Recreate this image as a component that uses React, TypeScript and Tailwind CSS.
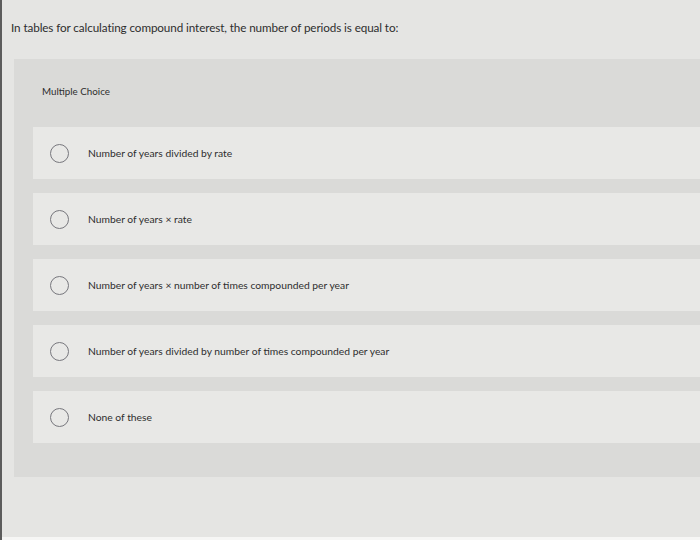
const options = [
  "Number of years divided by rate",
  "Number of years × rate",
  "Number of years × number of times compounded per year",
  "Number of years divided by number of times compounded per year",
  "None of these",
];

function Radio() {
  return (
    <span className="w-[19px] h-[19px] rounded-full border-[1.5px] border-[#77777d] shrink-0" />
  );
}

export default function App() {
  return (
    <div
      className="w-[700px] h-[540px] bg-[#e5e5e3] border-l-[2px] border-[#5c5c5c] flex flex-col overflow-hidden text-[#2e2e2e]"
      style={{ fontFamily: "Lato, 'Open Sans', sans-serif" }}
    >
      <p className="pl-[9px] pt-[19px] text-[11.7px] leading-[16px] tracking-[-0.1px]">
        In tables for calculating compound interest, the number of periods is equal to:
      </p>

      <div className="mt-[24px] ml-[12px] bg-[#dadad8] pt-[25px] h-[418px]">
        <p className="pl-[28px] text-[9.8px] leading-[14px]">Multiple Choice</p>
        <div className="mt-[29px] ml-[19px] flex flex-col gap-[14px]">
          {options.map((o) => (
            <div key={o} className="h-[52px] bg-[#e8e8e6] flex items-center">
              <div className="pl-[17px] pr-[19px] flex items-center">
                <Radio />
              </div>
              <span className="text-[10.3px] leading-[14px]">{o}</span>
            </div>
          ))}
        </div>
      </div>
      <div className="flex-1" />
      <div className="h-[3px] bg-[#f6f6f5]" />
    </div>
  );
}
